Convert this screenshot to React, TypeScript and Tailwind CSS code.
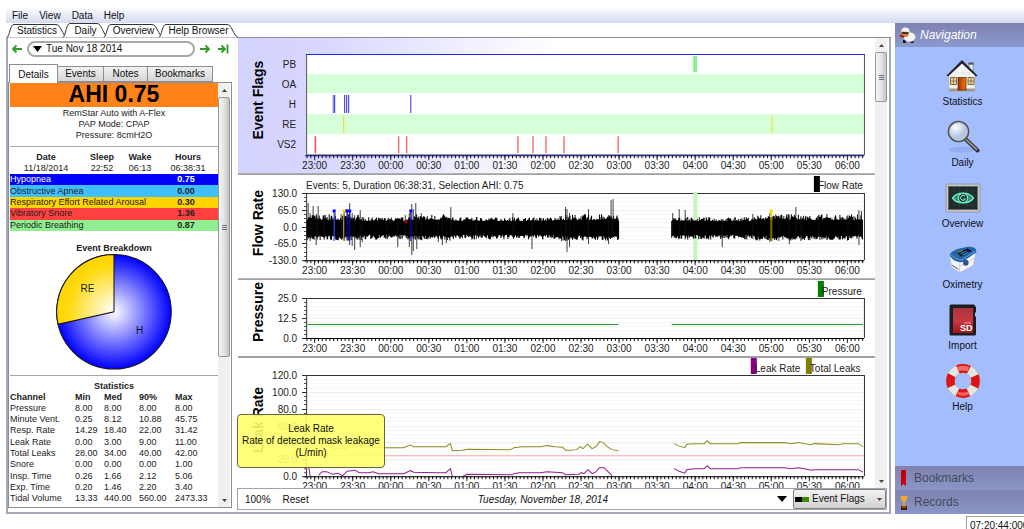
import React from 'react';

const HALF_HOURS = [
  '23:00', '23:30', '00:00', '00:30', '01:00', '01:30', '02:00', '02:30',
  '03:00', '03:30', '04:00', '04:30', '05:00', '05:30', '06:00',
];

const PLOT_LEFT = 68;
const PLOT_RIGHT = 625;
const FIRST_TICK = 76.5;
const HALF_HOUR = 38;

const INDICES = [
  { name: 'Hypopnea', value: '0.75', row: 'bg-[#0000ff] text-white' },
  { name: 'Obstructive Apnea', value: '0.00', row: 'bg-[#40bfff]' },
  { name: 'Respiratory Effort Related Arousal', value: '0.30', row: 'bg-[#ffd500]' },
  { name: 'Vibratory Snore', value: '1.36', row: 'bg-[#ff4040]' },
  { name: 'Periodic Breathing', value: '0.87', row: 'bg-[#90ee90]' },
];

const STATISTICS = [
  ['Pressure', '8.00', '8.00', '8.00', '8.00'],
  ['Minute Vent.', '0.25', '8.12', '10.88', '45.75'],
  ['Resp. Rate', '14.29', '18.40', '22.00', '31.42'],
  ['Leak Rate', '0.00', '3.00', '9.00', '11.00'],
  ['Total Leaks', '28.00', '34.00', '40.00', '42.00'],
  ['Snore', '0.00', '0.00', '0.00', '1.00'],
  ['Insp. Time', '0.26', '1.66', '2.12', '5.06'],
  ['Exp. Time', '0.20', '1.46', '2.20', '3.40'],
  ['Tidal Volume', '13.33', '440.00', '560.00', '2473.33'],
];

/* ---------- charts ---------- */

interface TimeAxisProps {
  y: number;
  color?: string;
}

function TimeAxis({ y, color = '#000' }: TimeAxisProps) {
  const minor = [];
  for (let x = FIRST_TICK - HALF_HOUR / 5; x < PLOT_RIGHT; x += HALF_HOUR / 10) {
    minor.push(`M${x.toFixed(1)} ${y}v3`);
  }
  return (
    <g>
      <path d={minor.join('')} stroke="#111" strokeWidth="1" />
      <path d={HALF_HOURS.map((_, i) => `M${FIRST_TICK + i * HALF_HOUR} ${y}v5`).join('')} stroke="#333" />
      <path d={`M${PLOT_LEFT - 1} ${y + 0.5}H${PLOT_RIGHT}`} stroke={color} />
      {HALF_HOURS.map((t, i) => (
        <text key={t} x={FIRST_TICK + i * HALF_HOUR} y={y + 14} textAnchor="middle">{t}</text>
      ))}
    </g>
  );
}

interface ValueAxisProps {
  top: number;
  bottom: number;
  labels: string[];
  minor: number;
}

function ValueAxis({ top, bottom, labels, minor }: ValueAxisProps) {
  const step = (bottom - top) / (labels.length - 1);
  const ticks = [];
  const grid = [];
  for (let i = 0; i <= (labels.length - 1) * minor; i++) {
    const y = Math.round(top + (i * step) / minor) + 0.5;
    ticks.push(`M${PLOT_LEFT - 2} ${y}h2`);
    grid.push(`M${PLOT_LEFT} ${y}H${PLOT_RIGHT}`);
  }
  return (
    <g>
      <path d={grid.join('')} stroke="#f7f7f7" />
      <path d={labels.map((_, i) => `M${PLOT_LEFT} ${Math.round(top + i * step) + 0.5}H${PLOT_RIGHT}`).join('')} stroke="#efefef" />
      <path d={ticks.join('')} stroke="#444" />
      <path d={labels.map((_, i) => `M${PLOT_LEFT - 4} ${Math.round(top + i * step) + 0.5}h4`).join('')} stroke="#222" />
      {labels.map((l, i) => (
        <text key={l} x="59" y={Math.round(top + i * step) + 4} textAnchor="end">{l}</text>
      ))}
      <path d={`M${PLOT_LEFT}.5 ${bottom}V${top}.5H${PLOT_RIGHT}.5V${bottom}`} fill="none" stroke="#333" />
    </g>
  );
}

interface ChartProps {
  title: string;
  titleY: number;
  height: number;
  children: React.ReactNode;
}

function Chart({ title, titleY, height, children }: ChartProps) {
  return (
    <svg
      viewBox={`0 0 636 ${height}`}
      className="block w-full h-auto shrink-0 text-[10px]"
      fill="#222"
      role="img"
      aria-label={title}
    >
      {children}
      <text
        transform={`translate(25 ${titleY}) rotate(-90)`}
        textAnchor="middle"
        className="text-[14px] font-bold"
        fill="#000"
      >
        {title}
      </text>
      <path d={`M0 ${height - 1}H636`} stroke="#a0a0a0" strokeWidth="2" />
    </svg>
  );
}

function EventFlags() {
  return (
    <Chart title="Event Flags" titleY={62} height={137}>
      <defs>
        <linearGradient id="flags-bg">
          <stop offset="0" stopColor="#d3d3ff" />
          <stop offset="0.12" stopColor="#d6d6ff" />
          <stop offset="0.5" stopColor="#fff" />
        </linearGradient>
      </defs>
      <rect width="636" height="136" fill="url(#flags-bg)" />
      <rect x="68" y="17" width="557" height="100" fill="#fff" />
      <rect x="69" y="36" width="556" height="19" fill="#d6ffd9" />
      <rect x="69" y="76" width="556" height="20" fill="#d6ffd9" />
      {['PB', 'OA', 'H', 'RE', 'VS2'].map((l, i) => (
        <text key={l} x="58" y={30 + i * 20} textAnchor="end">{l}</text>
      ))}
      <rect x="454.5" y="18" width="4" height="16" fill="#8eee90" />
      <path d="M95.5 57v18" stroke="#8a8aff" strokeWidth="2" />
      <path d="M96.5 57v18M106.5 57v18M108.5 57v18M110.5 57v18M172.5 57v18" stroke="#2c2cee" />
      <path d="M105.5 78v17" stroke="#f0d820" />
      <path d="M533 78v17" stroke="#eaea78" strokeWidth="2" />
      <path d="M76.5 98v17" stroke="#ffb0b0" />
      <path
        d="M77.5 98v17M160.5 98v17M168.5 98v17M279.5 98v17M294.5 98v17M307.5 98v17M325.5 98v17M379.5 98v17"
        stroke="#ee3535"
      />
      <path d="M68.5 16V117M625.5 16V117" stroke="#555" />
      <path d="M68 116.5H626" stroke="#777" />
      <path d="M68 16.5H626" stroke="#2222f5" />
      <TimeAxis y={117} color="#00008a" />
    </Chart>
  );
}

// [x, highest point, lowest point]
const BREATHS = [
  [70, 28, 62], [72, 38, 66], [75, 31, 64], [78, 39, 70], [80, 31, 62], [86, 40, 65],
  [97, 38, 62], [103, 39, 64], [106, 36, 66], [109, 34, 66], [111.5, 28, 70], [114, 38, 71],
  [116.5, 40, 75], [122, 35, 72], [124, 42, 67], [149, 46, 64], [159.5, 45, 72], [167, 40, 60],
  [171, 38, 72], [173.5, 29, 80], [175, 34, 76], [177.5, 28, 64], [178.5, 40, 74], [183, 38, 63],
  [200, 44, 67], [204, 42, 70], [208, 45, 68], [212.5, 32, 62], [238, 42, 64], [274.5, 38, 62],
  [293.5, 45, 74], [323, 41, 66], [327, 32, 66], [328.5, 34, 77], [331, 38, 72], [350, 34, 69],
  [370, 40, 69], [372.5, 25, 62], [374.5, 24, 60], [434, 38, 60], [440.5, 34, 60], [446.5, 35, 60],
  [483.5, 44, 72], [514, 39, 64], [531, 38, 67], [540, 41, 66], [550.5, 40, 69], [557, 32, 63],
  [562, 41, 66], [580, 40, 62], [609, 40, 62], [620, 35, 70], [622.5, 36, 62],
];

function flowPath() {
  let seed = 7;
  const rnd = () => {
    seed = (seed * 16807) % 2147483647;
    return seed / 2147483647;
  };
  let d = '';
  for (let x = 69; x < 624; x += 0.5) {
    if (x > 380 && x < 433) continue;
    const busy = x < 124 || (x > 170 && x < 212) || (x > 320 && x < 380) || x > 515;
    const up = (busy ? 7 : 6) + rnd() ** 3 * (busy ? 6 : 4);
    const down = (busy ? 9 : 8) + rnd() ** 2 * 5;
    d += `M${x} ${(52 - up).toFixed(1)}V${(51.5 + down).toFixed(1)}`;
  }
  return d;
}

function FlowRate() {
  return (
    <Chart title="Flow Rate" titleY={48} height={105}>
      <ValueAxis top={18} bottom={85} labels={['130.0', '65.0', '0.0', '-65.0', '-130.0']} minor={4} />
      <text x="68" y="14">Events: 5, Duration 06:38:31, Selection AHI: 0.75</text>
      <rect x="454.5" y="17" width="4" height="68" fill="#c4f5c4" />
      <path d={flowPath()} stroke="#000" strokeWidth="1" />
      <path d={BREATHS.map(([x, a, b]) => `M${x} ${a}V${b}`).join('')} stroke="#111" strokeWidth="0.8" />
      <path d="M96 36V66" stroke="#4040ff" strokeWidth="1.2" />
      <path d="M109 36V65M111.5 36V66M172.5 36V66" stroke="#0000e0" />
      <path d="M105.5 36V66" stroke="#e0b000" />
      <path d="M532.5 37V42" stroke="#ffd500" strokeWidth="2" />
      <path d="M532.5 42V66" stroke="#8a6a00" strokeWidth="2" />
      <path d="M94.5 34.5h3v3h-3zM107 34.5h6v3h-6zM171 34.5h3v3h-3z" fill="#0000ff" />
      <path d="M104 34.5h3v3h-3zM531 34.5h3v3h-3z" fill="#ffd500" />
      <rect x="166" y="45" width="3" height="3" fill="#b00000" />
      <rect x="575" y="1" width="6" height="16" fill="#000" />
      <text x="579" y="14">Flow Rate</text>
      <TimeAxis y={85} />
    </Chart>
  );
}

function Pressure() {
  return (
    <Chart title="Pressure" titleY={32} height={78}>
      <ValueAxis top={18} bottom={58} labels={['25.0', '12.5', '0.0']} minor={5} />
      <path d="M69 44.5H380M433 44.5H624" stroke="#2ea02e" />
      <rect x="579" y="1" width="6" height="16" fill="#008000" />
      <text x="583" y="15">Pressure</text>
      <TimeAxis y={58} />
    </Chart>
  );
}

const TOTAL_LEAKS = [
  'M69 87 72 93 79 92 84 89 90 87 96 91 103 90 107 92 112 86 119 86 125 88 135 89 147 89.5H165L172 87 175.5 88.5 197 88.5 207.5 88.5 212 85.5 214 92.5 223.5 92 230 91 272 91.5 275.5 89.5 283.5 88.5H302L308.5 87.5 317 88.5 324 89 327 92 332 92 338 91.5 341.5 88.5 344.5 90.5 349 86 353.5 90.5 358 88 361 83.5 365 84.5 368.5 88.5 373.5 91.5 380 92.5',
  'M435.5 85.5 440.5 88 446 89.5 448 86 455.5 85.5H465.5L468.5 82.5 471.5 85.5H499L502 84.5H545.5L552 85.5 559.5 84.5 565.5 85.5 572 86.5 575.5 85.5 600 86.5 604 85.5H619.5L624 88.5',
];

const LEAK_RATE = [
  'M70.5 108 72 118M80.5 117 84 113.5 88.5 113.5 94 116 100 115 104.5 117.5 109 113 117 112 121 114.5H130L135 113.5 140.5 115.5H165.5L172 112.5 175.5 114 197 114.5H207.5L212 110.5 214 118M225 117.5 229 116 272 116.5 280.5 114.5H302L308.5 113.5 324 114.5 327 116.5 340 116 343 114.5 345.5 115.5 349.5 111.5 353.5 115.5 357 114 361 109.5 365.5 109.5 370.5 114.5 373.5 117.5',
  'M435.5 110.5 440.5 113 446 115 448 111.5 455.5 110.5H465.5L468.5 107.5 471.5 110.5H499L502 109.5H545.5L552 110.5 559.5 109.5 565.5 110.5 572 112 575.5 111.5H619.5L624 114',
];

function LeakRate() {
  return (
    <Chart title="Leak Rate" titleY={62} height={138}>
      <ValueAxis top={17} bottom={118} labels={['120.0', '100.0', '80.0', '60.0', '40.0', '20.0', '0.0']} minor={4} />
      <path d="M69 97.5H625" stroke="#ffa5ad" />
      <path d={TOTAL_LEAKS.join('')} stroke="#8c8c20" fill="none" />
      <path d={LEAK_RATE.join('')} stroke="#902090" fill="none" />
      <rect x="512" y="0" width="6" height="16" fill="#800080" />
      <text x="516" y="14">Leak Rate</text>
      <rect x="567" y="0" width="6" height="16" fill="#808000" />
      <text x="571" y="14">Total Leaks</text>
      <TimeAxis y={118} />
    </Chart>
  );
}

/* ---------- small parts ---------- */

function Arrow({ up = false }: { up?: boolean }) {
  return (
    <svg width="5" height="3" viewBox="0 0 5 3">
      <path d={up ? 'M0 3 2.5 0 5 3z' : 'M0 0 2.5 3 5 0z'} fill="#444" />
    </svg>
  );
}

function ScrollBar({ thumb }: { thumb: string }) {
  return (
    <div className="w-3 shrink-0 flex flex-col items-center bg-[#f0f0f0]" aria-hidden="true">
      <div className="h-[14px] flex items-center"><Arrow up /></div>
      <div
        className={`w-full flex flex-col items-center justify-center gap-px rounded-[2px] border border-[#989898] bg-gradient-to-r from-[#f6f6f6] via-[#e4e4e4] to-[#c4c4c4] ${thumb}`}
      >
        <i className="w-[5px] h-px bg-gray-500" />
        <i className="w-[5px] h-px bg-gray-500" />
        <i className="w-[5px] h-px bg-gray-500" />
      </div>
      <div className="h-[14px] mt-auto flex items-center"><Arrow /></div>
    </div>
  );
}

interface PageTabProps {
  label: string;
  width: string;
  px: number;
  active?: boolean;
}

function PageTab({ label, width, px, active = false }: PageTabProps) {
  const top = active ? 0.5 : 1.5;
  return (
    <button className={`relative h-[15px] -ml-1 leading-4 ${width}`} role="tab" aria-selected={active}>
      <svg className="absolute inset-0 size-full overflow-visible" viewBox={`0 0 ${px} 15`}>
        <path
          d={`M0 14.5C3 12 3 ${top} 7 ${top}H${px - 11}C${px - 6} ${top} ${px - 5} 12 ${px} 14.5`}
          fill="#fff"
          stroke="#333"
        />
      </svg>
      <span className="relative">{label}</span>
    </button>
  );
}

function GreenArrow({ d, label }: { d: string; label: string }) {
  return (
    <button className="w-3 h-3 shrink-0" aria-label={label}>
      <svg viewBox="0 0 12 12" fill="none" stroke="#2e9a2e" strokeWidth="1.8">
        <path d={d} />
      </svg>
    </button>
  );
}

function Pie() {
  return (
    <svg viewBox="0 0 207 117" className="block w-full h-auto text-[10px]" role="img" aria-label="Event Breakdown">
      <defs>
        <radialGradient id="pie-h" gradientUnits="userSpaceOnUse" cx="103.5" cy="57.5" r="57">
          <stop offset="0" stopColor="#fff" />
          <stop offset="1" stopColor="#0000ff" />
        </radialGradient>
        <radialGradient id="pie-re" gradientUnits="userSpaceOnUse" cx="103.5" cy="57.5" r="57">
          <stop offset="0" stopColor="#fff" />
          <stop offset="0.8" stopColor="#ffd90f" />
          <stop offset="1" stopColor="#ffd500" />
        </radialGradient>
      </defs>
      <circle cx="103.5" cy="57.5" r="57" fill="url(#pie-h)" stroke="#111" />
      <path d="M103.5 57.5V0.5A57 57 0 0 0 47.8 70Z" fill="url(#pie-re)" stroke="#111" />
      <text x="77" y="38" textAnchor="middle" fill="#222">RE</text>
      <text x="129" y="80" textAnchor="middle" fill="#111">H</text>
    </svg>
  );
}

/* ---------- navigation icons ---------- */

function HouseIcon() {
  return (
    <svg width="34" height="34" viewBox="0 0 34 34">
      <defs>
        <linearGradient id="door" x2="1">
          <stop offset="0" stopColor="#a83200" />
          <stop offset="1" stopColor="#f07818" />
        </linearGradient>
      </defs>
      <path d="M24 5h4v10h-4z" fill="#eee" stroke="#666" strokeWidth=".6" />
      <path d="M23.3 3.5h5.4v2h-5.4z" fill="#555" />
      <path d="M4 16 17 4 30 16V32H4z" fill="#f4f4f4" stroke="#aaa" strokeWidth=".5" />
      <path d="M5 19h24M5 22h24M5 25h24M9 14h16" stroke="#d8d8d8" strokeWidth=".6" />
      <path d="M17 1 1.5 16.5 3 17.5 17 4.5 31 17.5 32.5 16.5z" fill="#222" />
      <path d="M4 29.5h26v2.8H4z" fill="#a09888" />
      <rect x="13" y="18.5" width="8" height="12.5" fill="url(#door)" stroke="#5a2000" strokeWidth=".7" />
      <path d="M5.5 18.5h6v7h-6zM23 18.5h6v7h-6z" fill="#ddd6a8" stroke="#8a6c30" />
      <path d="M8.5 18.5v7M5.5 22h6M26 18.5v7M23 22h6" stroke="#8a6c30" strokeWidth=".8" />
    </svg>
  );
}

function MagnifierIcon() {
  return (
    <svg width="34" height="34" viewBox="0 0 34 34">
      <defs>
        <radialGradient id="lens" cx=".35" cy=".3">
          <stop offset="0" stopColor="#fff" />
          <stop offset="1" stopColor="#b4c6e4" />
        </radialGradient>
      </defs>
      <ellipse cx="16" cy="29.5" rx="13" ry="3" fill="#7088c8" opacity=".3" />
      <path d="M20 19.5 31.5 30.5" stroke="#333" strokeWidth="4" strokeLinecap="round" />
      <path d="M19.5 19 31 29.8" stroke="#a0a0a0" strokeWidth="1.6" />
      <circle cx="12.5" cy="11.5" r="9.8" fill="url(#lens)" stroke="#505050" strokeWidth="2" />
      <circle cx="12.5" cy="11.5" r="9" fill="none" stroke="#ccc" strokeWidth=".9" />
    </svg>
  );
}

function EyeIcon() {
  return (
    <svg width="36" height="32" viewBox="0 0 36 32">
      <rect x="1" y="2" width="34" height="28" rx="1.5" fill="#c8c8c8" stroke="#888" strokeWidth=".7" />
      <rect x="3.5" y="4.5" width="29" height="23" fill="#1c2a2a" stroke="#666" />
      <path d="M4 9h28M4 13h28M4 19h28M4 23h28M9 5v22M14 5v22M22 5v22M27 5v22" stroke="#40504c" strokeWidth=".4" />
      <path d="M7.5 16C12 9.5 24 9.5 28.5 16 24 22.5 12 22.5 7.5 16z" fill="#3a8a78" stroke="#70e8c0" strokeWidth="1.4" />
      <circle cx="18" cy="16" r="4.6" fill="#183830" stroke="#70e8c0" strokeWidth="1.3" />
      <path d="M20 14.2A2.5 2.5 0 1 0 20.4 17H18.3" fill="none" stroke="#90ffd8" strokeWidth="1" />
    </svg>
  );
}

function OximeterIcon() {
  return (
    <svg width="30" height="29" viewBox="0 0 32 30">
      <path d="M2 12 4 23 12.5 29 27 21 30 6z" fill="#f6f6fa" stroke="#b8b8cc" strokeWidth=".6" />
      <path d="M12.5 19v10M13 22 29 13" stroke="#b4b8cc" strokeWidth=".8" />
      <path d="M2 11C2 7 7 4 21 1.5 27 1 31 3 30 7.5L15 18C9 18 4 15 2 11z" fill="#2464a8" />
      <path d="M3 10C8 14 12 15.5 15 15.5L29 6" fill="none" stroke="#70a8dc" strokeWidth="1" />
      <path d="M9 7.5 21 3.2 25.5 6 14 12z" fill="#10182c" />
      <path d="M13 9l7-3M15 10.3l7-3.2" stroke="#3898d8" strokeWidth="1" />
      <path d="M10 7.5l6-2" stroke="#c0c030" strokeWidth=".8" />
      <ellipse cx="19" cy="18.5" rx="3" ry="3.2" fill="#2c5488" />
      <path d="M4.5 21 11 25.5" stroke="#666" strokeWidth="1.2" />
    </svg>
  );
}

function SdCardIcon() {
  return (
    <svg width="30" height="34" viewBox="0 0 30 34">
      <defs>
        <linearGradient id="sd" x2="0" y2="1">
          <stop offset="0" stopColor="#a83440" />
          <stop offset=".5" stopColor="#c83840" />
          <stop offset="1" stopColor="#a01820" />
        </linearGradient>
      </defs>
      <path d="M3 1.500H26L28 4V9l-1 1v3l1 1V31q0 1.500-1.500 1.500H3Q1.500 32.500 1.500 31V3Q1.500 1.500 3 1.500z" fill="#1c1e22" />
      <rect x="5" y="5" width="20" height="25" fill="url(#sd)" />
      <text x="12" y="28" fill="#fff" className="text-[9px] font-bold">SD</text>
      <path d="M16 20h7" stroke="#e8a0a0" strokeWidth="1" />
    </svg>
  );
}

function LifebuoyIcon() {
  return (
    <svg width="36" height="36" viewBox="0 0 36 36">
      <circle cx="18" cy="18" r="12.6" fill="none" stroke="#b0b0b0" strokeWidth="9" />
      <circle cx="18" cy="18" r="12.6" fill="none" stroke="#e6e6e2" strokeWidth="8" />
      <circle
        cx="18" cy="18" r="12.6" fill="none" stroke="#dd1414" strokeWidth="8.6"
        strokeDasharray="11.4 8.392" strokeDashoffset="5.7"
      />
      <path d="M12 4Q18 1.500 24 4L22.500 8.500Q18 6.500 13.500 8.500z" fill="#f88080" opacity=".8" />
      <path d="M13 28.500Q18 30.500 23 28.500L24 31.500Q18 34 12 31.500z" fill="#f88080" opacity=".7" />
    </svg>
  );
}

function SheepIcon() {
  return (
    <svg width="17" height="18" viewBox="0 0 17 18">
      <path d="M5.5 14v3M13 14v3" stroke="#111" strokeWidth="3" />
      <ellipse cx="10.5" cy="11" rx="6" ry="4.8" fill="#f4f4f4" stroke="#aaa" strokeWidth=".5" />
      <circle cx="6" cy="7" r="4" fill="#c88040" />
      <path d="M2 5.5Q3 1 7 1.5T10.5 6z" fill="#f4f4f4" />
      <path d="M3 7h6" stroke="#222" strokeWidth="1.6" />
      <path d="M1 9.5 5 11" stroke="#b02010" strokeWidth="2" />
    </svg>
  );
}

const NAV_ITEMS = [
  { label: 'Statistics', Icon: HouseIcon },
  { label: 'Daily', Icon: MagnifierIcon },
  { label: 'Overview', Icon: EyeIcon },
  { label: 'Oximetry', Icon: OximeterIcon },
  { label: 'Import', Icon: SdCardIcon },
  { label: 'Help', Icon: LifebuoyIcon },
];

/* ---------- panels ---------- */

function DetailsPanel() {
  return (
    <div className="flex-1 min-h-0 flex border border-[#8c8e94] bg-white px-px">
      <div className="flex-1 min-w-0 overflow-hidden text-[9px] leading-[11px] text-[#222]">
        <h1 className="h-6 leading-[22px] bg-[#ff8318] text-center text-[23px] font-bold text-black">AHI 0.75</h1>
        <p className="pt-px text-center">
          RemStar Auto with A-Flex<br />PAP Mode: CPAP<br />Pressure: 8cmH2O
        </p>
        <hr className="my-[5px] border-[#a8a8a8]" />
        <table className="w-full table-fixed text-center">
          <thead>
            <tr>
              <th className="w-[72px]">Date</th>
              <th className="w-10">Sleep</th>
              <th className="w-9">Wake</th>
              <th>Hours</th>
            </tr>
          </thead>
          <tbody>
            <tr><td>11/18/2014</td><td>22:52</td><td>06:13</td><td>06:38:31</td></tr>
          </tbody>
        </table>
        <table className="w-full h-[57px]">
          <tbody>
            {INDICES.map((r) => (
              <tr key={r.name} className={r.row}>
                <td className="whitespace-nowrap">{r.name}</td>
                <td className="w-16 text-center font-bold">{r.value}</td>
              </tr>
            ))}
          </tbody>
        </table>
        <h2 className="mt-3 text-center font-bold">Event Breakdown</h2>
        <Pie />
        <hr className="mt-[3px] mb-[5px] border-[#a8a8a8]" />
        <table className="w-full h-[124px] table-fixed text-left whitespace-nowrap">
          <colgroup>
            <col className="w-[65px]" />
            <col className="w-[29px]" />
            <col className="w-[35px]" />
            <col className="w-9" />
            <col />
          </colgroup>
          <thead>
            <tr><th colSpan={5} className="text-center">Statistics</th></tr>
            <tr>
              <th>Channel</th>
              <th>Min</th>
              <th>Med</th>
              <th>90%</th>
              <th>Max</th>
            </tr>
          </thead>
          <tbody>
            {STATISTICS.map((row) => (
              <tr key={row[0]}>
                {row.map((cell, i) => <td key={i}>{cell}</td>)}
              </tr>
            ))}
          </tbody>
        </table>
      </div>
      <ScrollBar thumb="h-[260px]" />
    </div>
  );
}

function DailySidebar() {
  const tab = 'border border-[#8c8e94] bg-gradient-to-b from-[#f2f2f2] to-[#d4d4d4] h-4 leading-[14px]';
  return (
    <section className="w-[224px] shrink-0 flex flex-col pb-[2px]">
      <div className="h-[22px] flex items-center px-[3px]">
        <GreenArrow label="Previous day" d="M11 6H2M5.500 2.500 2 6 5.500 9.500" />
        <button className="ml-1 mr-1 flex-1 h-4 flex items-center gap-1 rounded-[8px] border-2 border-[#a8a8a8] px-1 leading-3">
          <svg width="9" height="6" viewBox="0 0 9 6"><path d="M0 0h9L4.500 6z" /></svg>
          Tue Nov 18 2014
        </button>
        <GreenArrow label="Next day" d="M1 6H10M6.500 2.500 10 6 6.500 9.500" />
        <span className="w-[6px]" />
        <GreenArrow label="Latest day" d="M1 6H8M4.500 2.500 8 6 4.500 9.500M10.500 1.500v9" />
      </div>
      <div className="h-[22px] flex items-end pl-px" role="tablist">
        <button role="tab" aria-selected="true" className="relative w-[49px] h-[19px] -mb-px border border-b-0 border-[#8c8e94] bg-white">Details</button>
        <button role="tab" className={`w-[46px] border-l-0 ${tab}`}>Events</button>
        <button role="tab" className={`w-11 border-l-0 ${tab}`}>Notes</button>
        <button role="tab" className={`w-[65px] border-l-0 ${tab}`}>Bookmarks</button>
      </div>
      <DetailsPanel />
    </section>
  );
}

function ChartsPane() {
  return (
    <section className="relative flex-1 min-w-0 flex flex-col ml-[5px]">
      <div className="flex-1 min-h-0 flex pl-px">
        <div className="flex-1 min-w-0 flex flex-col overflow-hidden">
          <EventFlags />
          <FlowRate />
          <Pressure />
          <LeakRate />
        </div>
        <ScrollBar thumb="h-[50px]" />
      </div>
      <div className="h-[22px] flex items-center border border-[#a0a4b0] pl-[7px]">
        <span>100%</span>
        <button className="ml-3">Reset</button>
        <span className="flex-1 text-center italic">Tuesday, November 18, 2014</span>
        <button aria-label="Choose graph layout" className="mr-[6px]">
          <svg width="10" height="6" viewBox="0 0 10 6"><path d="M0 0h10L5 6z" /></svg>
        </button>
        <label className="relative flex items-center">
          <span className="sr-only">Visible graphs</span>
          <select className="appearance-none w-[93px] h-5 pl-[18px] rounded-[2px] border border-[#808080] bg-gradient-to-b from-[#f4f4f4] to-[#d0d0d0] leading-[18px]">
            <option>Event Flags</option>
          </select>
          <span className="absolute left-[2px] w-[7px] h-[5px] bg-black" />
          <span className="absolute left-[9px] w-[7px] h-[5px] bg-[#3a8a00]" />
          <span className="absolute right-1 flex"><Arrow /></span>
        </label>
      </div>
      <div
        role="tooltip"
        className="absolute left-0 bottom-[42px] w-[148px] h-[54px] flex flex-col justify-center rounded-[4px] border border-[#66664a] bg-[#ffff6c]/90 text-center leading-3"
      >
        <p>Leak Rate</p>
        <p>Rate of detected mask leakage</p>
        <p>(L/min)</p>
      </div>
    </section>
  );
}

function Navigation() {
  return (
    <aside className="w-[129px] shrink-0 flex flex-col bg-[#a3bdff]">
      <h2 className="h-6 flex items-center gap-1 pl-1 bg-gradient-to-b from-[#8081b0] to-[#8a9ace] text-[12px] italic text-white">
        <SheepIcon />
        Navigation
      </h2>
      <nav className="flex-1 flex flex-col items-center gap-[10px] pt-[11px] pl-[6px]">
        {NAV_ITEMS.map(({ label, Icon }) => (
          <a key={label} href={`#${label.toLowerCase()}`} className="flex flex-col items-center">
            <span className="h-9 flex items-center"><Icon /></span>
            <span className="leading-[15px]">{label}</span>
          </a>
        ))}
      </nav>
      <button className="h-6 flex items-center gap-2 pl-[6px] bg-gradient-to-b from-[#8081b0] to-[#8a96c6] text-[12px] text-[#444a5c]">
        <svg width="5" height="16" viewBox="0 0 5 16">
          <path d="M0 0h5v16L2.500 14 0 16z" fill="#c80010" />
          <path d="M2.500 1v2" stroke="#600" />
        </svg>
        Bookmarks
      </button>
      <button className="h-6 flex items-center gap-[6px] pl-[5px] bg-gradient-to-b from-[#8081b0] to-[#8a96c6] text-[12px] text-[#444a5c]">
        <svg width="8" height="15" viewBox="0 0 8 15">
          <path d="M.5 1h7L6.500 5.500 4.800 7V10H3.200V7L1.500 5.500z" fill="#f0a830" />
          <path d="M1 11h6v4H1z" fill="#4a1c10" />
          <path d="M2.500 10h3v1.200h-3zM2.500 12.500h3" fill="#d89020" stroke="#d89020" strokeWidth=".6" />
        </svg>
        Records
      </button>
    </aside>
  );
}

export default function App() {
  return (
    <div className='h-screen flex flex-col overflow-hidden bg-white pl-[6px] font-["Liberation_Sans",Arial,sans-serif] text-[10px] text-[#111]'>
      <header className="mt-[7px] h-4 flex items-center gap-[11px] pl-[6px] bg-gradient-to-b from-white via-[#e8ecf8] to-[#d5dcf0]">
        {['File', 'View', 'Data', 'Help'].map((m) => <button key={m}>{m}</button>)}
      </header>
      <div className="flex-1 min-h-0 flex">
        <main className="flex-1 min-w-0 flex flex-col">
          <div className="h-[15px] flex pl-[5px] shadow-[inset_0_-1px_0_#8c8e94]" role="tablist">
            <PageTab label="Statistics" width="w-[60px]" px={60} />
            <PageTab label="Daily" width="w-[45px]" px={45} active />
            <PageTab label="Overview" width="w-[59px]" px={59} />
            <PageTab label="Help Browser" width="w-[79px]" px={79} />
          </div>
          <div className="flex-1 min-h-0 flex border-2 border-t-0 border-[#a4a8b8] pr-[2px] pb-[2px]">
            <DailySidebar />
            <ChartsPane />
          </div>
        </main>
        <div className="w-1 shrink-0" />
        <Navigation />
      </div>
      <footer className="h-[15px] shrink-0 flex justify-end pt-[2px]">
        <output className="w-[58px] h-5 border border-r-0 border-[#a0a0a0] pl-[3px] leading-[17px] whitespace-nowrap">07:20:44:000</output>
      </footer>
    </div>
  );
}
